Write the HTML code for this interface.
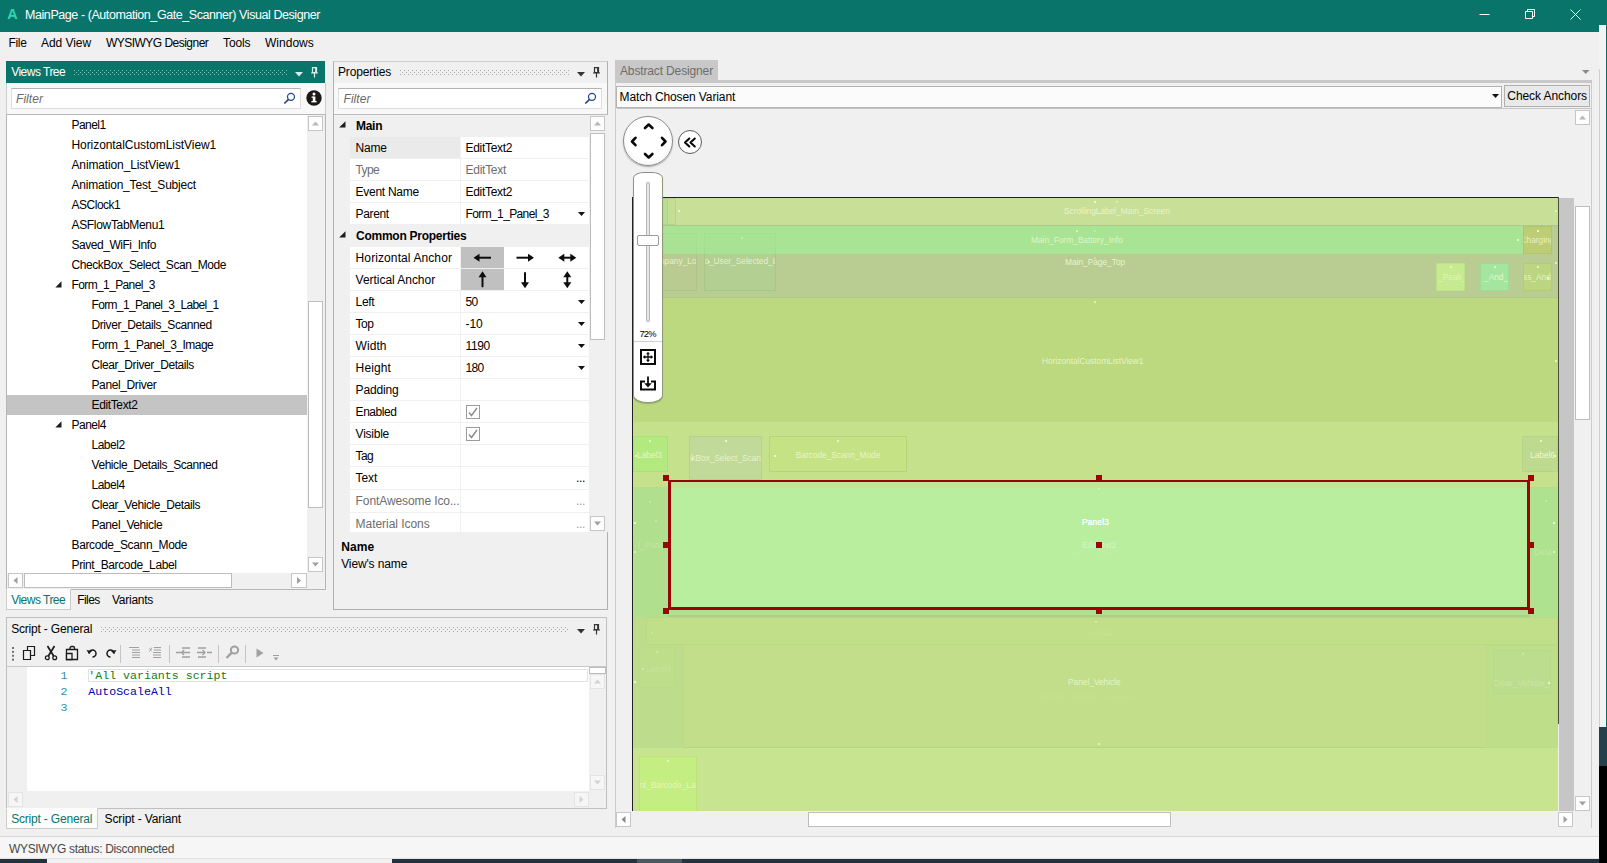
<!DOCTYPE html>
<html lang="en">
<head>
<meta charset="utf-8">
<title>MainPage - (Automation_Gate_Scanner) Visual Designer</title>
<style>
*{box-sizing:border-box;margin:0;padding:0}
html,body{width:1607px;height:863px;overflow:hidden;background:#f0f0f0}
body{position:relative;font-family:"Liberation Sans",sans-serif;font-size:12px;color:#000}
.a{position:absolute}
.t{position:absolute;white-space:pre;line-height:16px;height:16px}
svg{position:absolute;overflow:visible}
</style>
</head>
<body>
<div class="a" style="left:1599px;top:0px;width:8px;height:863px;background:#f3f3f3;"></div>
<div class="a" style="left:1599px;top:0px;width:8px;height:25px;background:#09756a;"></div>
<div class="a" style="left:1605.5px;top:25px;width:1.5px;height:702px;background:#0b6b60;"></div>
<div class="a" style="left:1599px;top:69px;width:1px;height:658px;background:#cfcfcf;"></div>
<div class="a" style="left:1599px;top:727px;width:8px;height:39px;background:#24414b;"></div>
<div class="a" style="left:1599px;top:766px;width:8px;height:97px;background:#000;"></div>
<div class="a" style="left:0px;top:858px;width:1599px;height:1px;background:#e2e2e2;"></div>
<div class="a" style="left:0px;top:859px;width:1599px;height:4px;background:#22333f;"></div>
<div class="a" style="left:47px;top:859px;width:345px;height:4px;background:#f2f2f2;"></div>
<div class="a" style="left:637px;top:859px;width:45px;height:4px;background:#4a5860;"></div>
<div class="a" style="left:0px;top:0px;width:1599px;height:32px;background:#09756a;"></div>
<svg style="left:1470px;top:0" width="129" height="32" viewBox="0 0 129 32" fill="none" stroke="#fff" stroke-width="1"><path d="M9.5 14.5h10"/><path d="M55.5 11.5h7v7h-7z M57.5 11.5v-2h7v7h-2"/><path d="M100.5 9.5l10 10M110.5 9.5l-10 10"/></svg>
<div class="a" style="left:0px;top:32px;width:1599px;height:25px;background:#f0f0f0;"></div>
<div class="a" style="left:6px;top:61px;width:319px;height:22px;background:#09756a;"></div>
<div class="a" style="left:74px;top:70px;width:214px;height:5px;background-image:radial-gradient(circle at 0.5px 0.5px,#7fc4b8 0.55px,transparent 0.75px),radial-gradient(circle at 0.5px 0.5px,#7fc4b8 0.55px,transparent 0.75px);background-size:4px 4px;background-position:0 0,2px 2px"></div>
<svg style="left:295px;top:71.7px" width="8" height="5" viewBox="0 0 8 5"><path d="M0 0h8l-4 4.5z" fill="#d8efe9"/></svg>
<svg style="left:311.0px;top:66.7px" width="8" height="11" viewBox="0 0 8 11" fill="none" stroke="#d8efe9" stroke-width="1.200"><path d="M1.500 0.600h4v5h-4z M4.700 0.600v5 M0 6h7 M3.500 6v4.500"/></svg>
<div class="a" style="left:6px;top:83px;width:319.5px;height:507px;background:#f0f0f0;border:1px solid #cccccc;border-top:none;"></div>
<div class="a" style="left:7px;top:83px;width:317.5px;height:31px;background:#f8f8f8;"></div>
<div class="a" style="left:11px;top:88px;width:290px;height:21px;background:#fff;border:1px solid #dedede;border-top-color:#b4b4b4;"></div>
<svg style="left:283px;top:92px" width="13" height="13" viewBox="0 0 13 13" fill="none" stroke="#21488c" stroke-width="1.250"><circle cx="8" cy="4.800" r="3.500"/><path d="M5.500 7.400L1.300 11.500" stroke-width="1.700"/></svg>
<svg style="left:306px;top:90px" width="16" height="16" viewBox="0 0 16 16"><circle cx="8" cy="8" r="7.700" fill="#1d1818"/><rect x="6.8" y="6.5" width="2.6" height="5.5" fill="#fff"/><rect x="5.6" y="6.5" width="2" height="1.3" fill="#fff"/><rect x="5.4" y="11" width="5.2" height="1.4" fill="#fff"/><circle cx="8" cy="4" r="1.5" fill="#fff"/></svg>
<div class="a" style="left:6px;top:114px;width:319.5px;height:476px;background:#fff;border:1px solid #b6b6b6;"></div>
<div class="a" style="left:7px;top:395px;width:300px;height:20px;background:#c4c4c4;"></div>
<svg style="left:54.500px;top:280.5px" width="7" height="7" viewBox="0 0 7 7"><path d="M6.500 0.300v6.200h-6.200z" fill="#1c1c1c"/></svg>
<svg style="left:54.500px;top:420.5px" width="7" height="7" viewBox="0 0 7 7"><path d="M6.500 0.300v6.200h-6.200z" fill="#1c1c1c"/></svg>
<div class="a" style="left:307px;top:115px;width:17.5px;height:458px;background:#f0f0f0;"></div>
<div class="a" style="left:308px;top:116px;width:15px;height:15px;background:#fdfdfd;border:1px solid #c6c6c6;"></div>
<svg style="left:0;top:0" width="1" height="1"><path d="M312.0 125.5h7l-3.5 -4z" fill="#b8b8b8"/></svg>
<div class="a" style="left:308px;top:301px;width:15px;height:207px;background:#fff;border:1px solid #bdbdbd;"></div>
<div class="a" style="left:308px;top:557px;width:15px;height:15px;background:#fdfdfd;border:1px solid #c6c6c6;"></div>
<svg style="left:0;top:0" width="1" height="1"><path d="M312.0 562.5h7l-3.5 4z" fill="#a0a0a0"/></svg>
<div class="a" style="left:7px;top:573px;width:317.5px;height:16px;background:#f0f0f0;"></div>
<div class="a" style="left:8px;top:573px;width:15px;height:15px;background:#fdfdfd;border:1px solid #c6c6c6;"></div>
<svg style="left:0;top:0" width="1" height="1"><path d="M17.5 577.0v7l-4 -3.5z" fill="#a0a0a0"/></svg>
<div class="a" style="left:24px;top:573px;width:208px;height:15px;background:#fff;border:1px solid #bdbdbd;"></div>
<div class="a" style="left:291px;top:573px;width:16px;height:15px;background:#fdfdfd;border:1px solid #c6c6c6;"></div>
<svg style="left:0;top:0" width="1" height="1"><path d="M297.0 577.0v7l4 -3.5z" fill="#a0a0a0"/></svg>
<div class="a" style="left:6px;top:589px;width:65px;height:21px;background:#fcfcfc;border:1px solid #cccccc;border-top:1px solid #fcfcfc;"></div>
<div class="a" style="left:333px;top:60.5px;width:274.5px;height:549.5px;background:#f0f0f0;border:1px solid #b0b0b0;border-top-color:#cdcdcd;"></div>
<div class="a" style="left:400px;top:70px;width:170px;height:5px;background-image:radial-gradient(circle at 0.5px 0.5px,#a8a8a8 0.55px,transparent 0.75px),radial-gradient(circle at 0.5px 0.5px,#a8a8a8 0.55px,transparent 0.75px);background-size:4px 4px;background-position:0 0,2px 2px"></div>
<svg style="left:577px;top:71.7px" width="8" height="5" viewBox="0 0 8 5"><path d="M0 0h8l-4 4.5z" fill="#333"/></svg>
<svg style="left:593.0px;top:66.7px" width="8" height="11" viewBox="0 0 8 11" fill="none" stroke="#333" stroke-width="1.200"><path d="M1.500 0.600h4v5h-4z M4.700 0.600v5 M0 6h7 M3.500 6v4.500"/></svg>
<div class="a" style="left:334px;top:83px;width:272.5px;height:31px;background:#f8f8f8;"></div>
<div class="a" style="left:338px;top:88px;width:264px;height:21px;background:#fff;border:1px solid #dedede;border-top-color:#b4b4b4;"></div>
<svg style="left:584px;top:92px" width="13" height="13" viewBox="0 0 13 13" fill="none" stroke="#21488c" stroke-width="1.250"><circle cx="8" cy="4.800" r="3.500"/><path d="M5.500 7.400L1.300 11.500" stroke-width="1.700"/></svg>
<div class="a" style="left:334px;top:114px;width:274px;height:418px;background:#f0f0f0;border:1px solid #bcbcbc;border-right:none;border-left:none;border-bottom:none;"></div>
<svg style="left:338.500px;top:121.2px" width="7" height="7" viewBox="0 0 7 7"><path d="M6.500 0.200v6.300h-6.300z" fill="#1c1c1c"/></svg>
<div class="a" style="left:350px;top:137px;width:110px;height:21px;background:#eaeaea;"></div>
<div class="a" style="left:461px;top:137px;width:128px;height:21px;background:#fff;"></div>
<div class="a" style="left:350px;top:159px;width:110px;height:21px;background:#fff;"></div>
<div class="a" style="left:461px;top:159px;width:128px;height:21px;background:#fff;"></div>
<div class="a" style="left:350px;top:181px;width:110px;height:21px;background:#fff;"></div>
<div class="a" style="left:461px;top:181px;width:128px;height:21px;background:#fff;"></div>
<div class="a" style="left:350px;top:203px;width:110px;height:21px;background:#fff;"></div>
<div class="a" style="left:461px;top:203px;width:128px;height:21px;background:#fff;"></div>
<svg style="left:578.0px;top:212.2px" width="7" height="4" viewBox="0 0 7 4"><path d="M0 0h7l-3.5 4z" fill="#111"/></svg>
<svg style="left:338.500px;top:231.2px" width="7" height="7" viewBox="0 0 7 7"><path d="M6.500 0.200v6.300h-6.300z" fill="#1c1c1c"/></svg>
<div class="a" style="left:350px;top:247px;width:110px;height:21px;background:#fff;"></div>
<div class="a" style="left:461px;top:247px;width:128px;height:21px;background:#fff;"></div>
<div class="a" style="left:461px;top:247px;width:43px;height:21px;background:#c0c0c0;"></div>
<svg style="left:0;top:0" width="1" height="1"><path d="M477.0 257.7H491.0" stroke="#0c0c0c" stroke-width="2" fill="none"/><path d="M473.5 257.7l6 -4v8z" fill="#0c0c0c" stroke="none"/></svg>
<svg style="left:0;top:0" width="1" height="1"><path d="M516.5 257.7H530.5" stroke="#0c0c0c" stroke-width="2" fill="none"/><path d="M534 257.7l-6 -4v8z" fill="#0c0c0c" stroke="none"/></svg>
<svg style="left:0;top:0" width="1" height="1"><path d="M561.8 257.7H572.8" stroke="#0c0c0c" stroke-width="2" fill="none"/><path d="M558.3 257.7l6 -4v8z" fill="#0c0c0c" stroke="none"/><path d="M576.3 257.7l-6 -4v8z" fill="#0c0c0c" stroke="none"/></svg>
<div class="a" style="left:350px;top:269px;width:110px;height:21px;background:#fff;"></div>
<div class="a" style="left:461px;top:269px;width:128px;height:21px;background:#fff;"></div>
<div class="a" style="left:461px;top:269px;width:43px;height:21px;background:#c0c0c0;"></div>
<svg style="left:0;top:0" width="1" height="1"><path d="M482.5 275.2V287.2" stroke="#0c0c0c" stroke-width="2" fill="none"/><path d="M482.5 271.2l-4 6h8z" fill="#0c0c0c" stroke="none"/></svg>
<svg style="left:0;top:0" width="1" height="1"><path d="M525 272.2V284.2" stroke="#0c0c0c" stroke-width="2" fill="none"/><path d="M525 288.2l-4 -6h8z" fill="#0c0c0c" stroke="none"/></svg>
<svg style="left:0;top:0" width="1" height="1"><path d="M567.3 275.2V284.2" stroke="#0c0c0c" stroke-width="2" fill="none"/><path d="M567.3 271.2l-4 6h8z" fill="#0c0c0c" stroke="none"/><path d="M567.3 288.2l-4 -6h8z" fill="#0c0c0c" stroke="none"/></svg>
<div class="a" style="left:350px;top:291px;width:110px;height:21px;background:#fff;"></div>
<div class="a" style="left:461px;top:291px;width:128px;height:21px;background:#fff;"></div>
<svg style="left:578.0px;top:300.2px" width="7" height="4" viewBox="0 0 7 4"><path d="M0 0h7l-3.5 4z" fill="#111"/></svg>
<div class="a" style="left:350px;top:313px;width:110px;height:21px;background:#fff;"></div>
<div class="a" style="left:461px;top:313px;width:128px;height:21px;background:#fff;"></div>
<svg style="left:578.0px;top:322.2px" width="7" height="4" viewBox="0 0 7 4"><path d="M0 0h7l-3.5 4z" fill="#111"/></svg>
<div class="a" style="left:350px;top:335px;width:110px;height:21px;background:#fff;"></div>
<div class="a" style="left:461px;top:335px;width:128px;height:21px;background:#fff;"></div>
<svg style="left:578.0px;top:344.2px" width="7" height="4" viewBox="0 0 7 4"><path d="M0 0h7l-3.5 4z" fill="#111"/></svg>
<div class="a" style="left:350px;top:357px;width:110px;height:21px;background:#fff;"></div>
<div class="a" style="left:461px;top:357px;width:128px;height:21px;background:#fff;"></div>
<svg style="left:578.0px;top:366.2px" width="7" height="4" viewBox="0 0 7 4"><path d="M0 0h7l-3.5 4z" fill="#111"/></svg>
<div class="a" style="left:350px;top:379px;width:110px;height:21px;background:#fff;"></div>
<div class="a" style="left:461px;top:379px;width:128px;height:21px;background:#fff;"></div>
<div class="a" style="left:350px;top:401px;width:110px;height:21px;background:#fff;"></div>
<div class="a" style="left:461px;top:401px;width:128px;height:21px;background:#fff;"></div>
<div class="a" style="left:466px;top:405px;width:14px;height:14px;background:#fff;border:1px solid #9c9c9c;"></div>
<svg style="left:468px;top:407px" width="10" height="10" viewBox="0 0 10 10"><path d="M1 5.5l2.5 3L9 1" fill="none" stroke="#8a8a8a" stroke-width="1.4"/></svg>
<div class="a" style="left:350px;top:423px;width:110px;height:21px;background:#fff;"></div>
<div class="a" style="left:461px;top:423px;width:128px;height:21px;background:#fff;"></div>
<div class="a" style="left:466px;top:427px;width:14px;height:14px;background:#fff;border:1px solid #9c9c9c;"></div>
<svg style="left:468px;top:429px" width="10" height="10" viewBox="0 0 10 10"><path d="M1 5.5l2.5 3L9 1" fill="none" stroke="#8a8a8a" stroke-width="1.4"/></svg>
<div class="a" style="left:350px;top:445px;width:110px;height:21px;background:#fff;"></div>
<div class="a" style="left:461px;top:445px;width:128px;height:21px;background:#fff;"></div>
<div class="a" style="left:350px;top:467px;width:110px;height:22px;background:#fff;"></div>
<div class="a" style="left:461px;top:467px;width:128px;height:22px;background:#fff;"></div>
<div class="a" style="left:350px;top:490px;width:110px;height:22px;background:#fff;"></div>
<div class="a" style="left:461px;top:490px;width:128px;height:22px;background:#fff;"></div>
<div class="a" style="left:350px;top:513px;width:110px;height:19px;background:#fff;"></div>
<div class="a" style="left:461px;top:513px;width:128px;height:19px;background:#fff;"></div>
<div class="a" style="left:589px;top:115px;width:18px;height:417px;background:#f0f0f0;"></div>
<div class="a" style="left:590px;top:116px;width:15px;height:15px;background:#fdfdfd;border:1px solid #c6c6c6;"></div>
<svg style="left:0;top:0" width="1" height="1"><path d="M594.0 125.5h7l-3.5 -4z" fill="#b8b8b8"/></svg>
<div class="a" style="left:590px;top:133px;width:15px;height:207px;background:#fff;border:1px solid #bdbdbd;"></div>
<div class="a" style="left:590px;top:516px;width:15px;height:15px;background:#fdfdfd;border:1px solid #c6c6c6;"></div>
<svg style="left:0;top:0" width="1" height="1"><path d="M594.0 521.5h7l-3.5 4z" fill="#a0a0a0"/></svg>
<div class="a" style="left:6px;top:617px;width:601px;height:192px;background:#f0f0f0;border:1px solid #c0c0c0;"></div>
<div class="a" style="left:101px;top:627px;width:468px;height:5px;background-image:radial-gradient(circle at 0.5px 0.5px,#a8a8a8 0.55px,transparent 0.75px),radial-gradient(circle at 0.5px 0.5px,#a8a8a8 0.55px,transparent 0.75px);background-size:4px 4px;background-position:0 0,2px 2px"></div>
<svg style="left:577px;top:628.7px" width="8" height="5" viewBox="0 0 8 5"><path d="M0 0h8l-4 4.5z" fill="#333"/></svg>
<svg style="left:593.0px;top:623.7px" width="8" height="11" viewBox="0 0 8 11" fill="none" stroke="#333" stroke-width="1.200"><path d="M1.500 0.600h4v5h-4z M4.700 0.600v5 M0 6h7 M3.500 6v4.500"/></svg>
<div class="a" style="left:12px;top:646.500px;width:2px;height:14px;background-image:linear-gradient(#707070 1.600px,transparent 1.600px);background-size:2px 3.900px"></div>
<svg style="left:22px;top:645px" width="16" height="16" viewBox="0 0 16 16" fill="#f0f0f0" stroke="#1a1a1a" stroke-width="1.2"><path d="M5.5 1.5h7v9h-7z"/><path d="M1.5 5.5h7v9h-7z"/></svg>
<svg style="left:43px;top:645px" width="16" height="16" viewBox="0 0 16 16" fill="none" stroke="#1a1a1a" stroke-width="1.3"><path d="M4.500 1l6.300 10.300M11.500 1L5.200 11.300" stroke-width="1.700"/><circle cx="4.300" cy="12.800" r="1.900"/><circle cx="11.700" cy="12.800" r="1.900"/></svg>
<svg style="left:64px;top:645px" width="16" height="16" viewBox="0 0 16 16" fill="none" stroke="#1a1a1a" stroke-width="1.300"><path d="M6 4.500v-1.500a1.500 1.500 0 0 1 1.500 -1.500h1.500a1.500 1.500 0 0 1 1.500 1.500v1.500"/><path d="M2.500 4.500h11v10h-11z"/><path d="M2.500 8.500h5.500v6h-5.500z" fill="#f0f0f0"/></svg>
<svg style="left:86px;top:647px" width="13" height="12" viewBox="0 0 13 12" fill="none" stroke="#1a1a1a" stroke-width="1.5"><path d="M3 6.500a3.500 3.500 0 1 1 3.500 3.500"/><path d="M0.500 3l2.500 4 3 -3z" fill="#1a1a1a" stroke="none"/></svg>
<svg style="left:104px;top:647px" width="13" height="12" viewBox="0 0 13 12" fill="none" stroke="#1a1a1a" stroke-width="1.5"><path d="M10 6.500a3.500 3.500 0 1 0 -3.500 3.500"/><path d="M12.500 3l-2.500 4 -3 -3z" fill="#1a1a1a" stroke="none"/></svg>
<div class="a" style="left:120px;top:645px;width:1px;height:18px;background:#c4c4c4;"></div>
<svg style="left:128px;top:647px" width="13" height="11" viewBox="0 0 13 11" stroke="#a0a0a0" stroke-width="1" fill="none"><path d="M1 0.500h10M4 3h8M4 5.500h8M4 8h8M4 10.500h8"/></svg>
<svg style="left:149px;top:647px" width="13" height="11" viewBox="0 0 13 11" stroke="#a0a0a0" stroke-width="1" fill="none"><path d="M5 0.500h7M5 3h7M4 5.500h8M4 8h8M4 10.500h8M0.500 1.500l2 2.500M3 0.500l-2.500 4"/></svg>
<div class="a" style="left:169px;top:645px;width:1px;height:18px;background:#c4c4c4;"></div>
<svg style="left:176px;top:647px" width="15" height="11" viewBox="0 0 15 11" stroke="#a0a0a0" stroke-width="1.3" fill="none"><path d="M6 1h8M0 5.500h5M9 5.500h5M6 10h8M5.500 5.500h5M8 3l-2.500 2.500 2.500 2.500"/></svg>
<svg style="left:197px;top:647px" width="15" height="11" viewBox="0 0 15 11" stroke="#a0a0a0" stroke-width="1.3" fill="none"><path d="M1 1h8M0 5.500h3M10 5.500h5M1 10h8M3 5.500h5M5.500 3l2.500 2.500 -2.500 2.500"/></svg>
<div class="a" style="left:218px;top:645px;width:1px;height:18px;background:#c4c4c4;"></div>
<svg style="left:225px;top:645px" width="15" height="15" viewBox="0 0 15 15" fill="none" stroke="#a0a0a0" stroke-width="2"><circle cx="9.5" cy="5" r="3.600"/><path d="M6.800 7.700L1.500 13" stroke-width="2.400"/></svg>
<div class="a" style="left:245px;top:645px;width:1px;height:18px;background:#c4c4c4;"></div>
<svg style="left:256px;top:648px" width="8" height="10" viewBox="0 0 8 10"><path d="M0.500 0.500v9l7 -4.500z" fill="#a0a0a0"/></svg>
<svg style="left:273px;top:655px" width="6" height="6" viewBox="0 0 6 6"><path d="M0 0.500h6" stroke="#a0a0a0"/><path d="M0.500 2.500h5l-2.500 3z" fill="#a0a0a0"/></svg>
<div class="a" style="left:7px;top:666px;width:599px;height:125px;background:#fff;border:1px solid #c8c8c8;border-left:none;border-right:none;border-bottom:none;"></div>
<div class="a" style="left:7px;top:667px;width:20px;height:124px;background:#f0f0f0;"></div>
<div class="a" style="left:88px;top:668.5px;width:500px;height:13.5px;background:#fff;border:1px solid #e2e2e2;"></div>
<div class="a" style="left:589px;top:668px;width:17px;height:124px;background:#f0f0f0;"></div>
<div class="a" style="left:589px;top:667px;width:17px;height:6.5px;background:#fff;border:1px solid #bdbdbd;"></div>
<div class="a" style="left:590px;top:674px;width:15px;height:15px;background:#f6f6f6;border:1px solid #e4e4e4;"></div>
<svg style="left:0;top:0" width="1" height="1"><path d="M594.0 683.5h7l-3.5 -4z" fill="#d4d4d4"/></svg>
<div class="a" style="left:590px;top:775px;width:15px;height:15px;background:#f6f6f6;border:1px solid #e4e4e4;"></div>
<svg style="left:0;top:0" width="1" height="1"><path d="M594.0 780.5h7l-3.5 4z" fill="#d4d4d4"/></svg>
<div class="a" style="left:7px;top:791px;width:599px;height:17px;background:#f0f0f0;"></div>
<div class="a" style="left:8px;top:792px;width:15px;height:15px;background:#f6f6f6;border:1px solid #e4e4e4;"></div>
<svg style="left:0;top:0" width="1" height="1"><path d="M17.5 796.0v7l-4 -3.5z" fill="#d4d4d4"/></svg>
<div class="a" style="left:574px;top:792px;width:15px;height:15px;background:#f6f6f6;border:1px solid #e4e4e4;"></div>
<svg style="left:0;top:0" width="1" height="1"><path d="M579.5 796.0v7l4 -3.5z" fill="#d4d4d4"/></svg>
<div class="a" style="left:6px;top:808px;width:92px;height:21px;background:#fcfcfc;border:1px solid #cccccc;border-top:1px solid #fcfcfc;"></div>
<div class="a" style="left:0px;top:836px;width:1599px;height:1px;background:#d6d6d6;"></div>
<div class="a" style="left:0px;top:837px;width:1599px;height:21px;background:#f6f6f6;"></div>
<div class="a" style="left:614.5px;top:60px;width:103.5px;height:21px;background:#c8c8c8;"></div>
<div class="a" style="left:614.5px;top:80px;width:977.5px;height:3px;background:#c8c8c8;"></div>
<svg style="left:1581.500px;top:70px" width="7.500" height="4" viewBox="0 0 7.500 4"><path d="M0 0h7.500l-3.750 4z" fill="#8a8a8a"/></svg>
<div class="a" style="left:614.5px;top:83px;width:977.5px;height:745px;background:#f0f0f0;border:1px solid #cccccc;border-top:none;"></div>
<div class="a" style="left:615.5px;top:85.5px;width:886.5px;height:22px;background:#fbfbfb;border:1px solid #b4b4b4;"></div>
<svg style="left:1492px;top:94px" width="7" height="4" viewBox="0 0 7 4"><path d="M0 0h7l-3.500 4z" fill="#111"/></svg>
<div class="a" style="left:1504px;top:85px;width:86px;height:21.5px;background:#e9e9e9;border:1px solid #b0b0b0;"></div>
<div class="a" style="left:617px;top:108px;width:974px;height:1px;background:#c4c4c4;"></div>
<div class="a" id="canvas" style="left:633px;top:198px;width:925px;height:612.500px;overflow:hidden;background:#c3df8c">
<div class="a" style="left:0px;top:0px;width:925px;height:28px;background:#c8df98;overflow:hidden;"><span class="t" style="left:431px;top:7.0px;font-size:8.400px;line-height:12px;height:12px;color:rgba(246,252,222,.72);font-weight:normal;letter-spacing:-0.030px">ScrollingLabel_Main_Screen</span><div class="a" style="left:461px;top:2.5px;width:2px;height:2px;background:rgba(248,255,225,0.8)"></div><div class="a" style="left:482.5px;top:2.5px;width:2px;height:2px;background:rgba(248,255,225,0.4)"></div><div class="a" style="left:922px;top:12px;width:2px;height:2px;background:rgba(248,255,225,0.6)"></div><div class="a" style="left:45px;top:12px;width:2px;height:2px;background:rgba(248,255,225,0.7)"></div></div>
<div class="a" style="left:0px;top:27px;width:925px;height:1.5px;background:#abc98a;overflow:hidden;"></div>
<div class="a" style="left:0px;top:28px;width:890px;height:28px;background:#a8e494;overflow:hidden;"><span class="t" style="left:398px;top:8.0px;font-size:8.400px;line-height:12px;height:12px;color:rgba(246,252,222,.72);font-weight:normal;letter-spacing:-0.030px">Main_Form_Battery_Info</span><div class="a" style="left:461px;top:4px;width:2px;height:2px;background:rgba(248,255,225,0.25)"></div><div class="a" style="left:884px;top:13px;width:2px;height:2px;background:rgba(248,255,225,0.7)"></div><div class="a" style="left:442.5px;top:3.5px;width:2px;height:2px;background:rgba(248,255,225,0.6)"></div></div>
<div class="a" style="left:0px;top:56px;width:925px;height:44px;background:#b9cc91;overflow:hidden;"><span class="t" style="left:432px;top:2.0px;font-size:8.400px;line-height:12px;height:12px;color:rgba(246,252,222,.82);font-weight:normal;letter-spacing:-0.030px">Main_Page_Top</span><div class="a" style="left:461px;top:3px;width:2px;height:2px;background:rgba(248,255,225,0.3)"></div><div class="a" style="left:922px;top:8px;width:2px;height:2px;background:rgba(248,255,225,0.7)"></div></div>
<div class="a" style="left:0px;top:99px;width:925px;height:1px;background:#b0c986;overflow:hidden;"></div>
<div class="a" style="left:0px;top:100px;width:925px;height:124px;background:#bcd980;overflow:hidden;"><span class="t" style="left:409px;top:56.5px;font-size:8.400px;line-height:12px;height:12px;color:rgba(246,252,222,.76);font-weight:normal;letter-spacing:-0.030px">HorizontalCustomListView1</span><div class="a" style="left:461px;top:3px;width:2px;height:2px;background:rgba(248,255,225,0.6)"></div><div class="a" style="left:922px;top:62px;width:2px;height:2px;background:rgba(248,255,225,0.7)"></div></div>
<div class="a" style="left:0px;top:224px;width:925px;height:66px;background:#c5e18b;overflow:hidden;"></div>
<div class="a" style="left:0px;top:289px;width:925px;height:1px;background:#bbd98a;overflow:hidden;"></div>
<div class="a" style="left:0px;top:290px;width:925px;height:129px;background:#b0e090;overflow:hidden;"></div>
<div class="a" style="left:0px;top:417px;width:925px;height:2px;background:#a6d287;overflow:hidden;"></div>
<div class="a" style="left:0px;top:419px;width:925px;height:131px;background:#c2de8a;overflow:hidden;"><div class="a" style="left:465px;top:2px;width:2px;height:2px;background:rgba(248,255,225,0.5)"></div><div class="a" style="left:465px;top:126px;width:2px;height:2px;background:rgba(248,255,225,0.6)"></div></div>
<div class="a" style="left:0px;top:549px;width:925px;height:1px;background:#b6d580;overflow:hidden;"></div>
<div class="a" style="left:0px;top:550px;width:925px;height:64px;background:#c7e490;overflow:hidden;"></div>
<div class="a" style="left:0px;top:0px;width:35px;height:27px;background:#badd92;overflow:hidden;border:1px solid #b4d28a;"></div>
<div class="a" style="left:35px;top:0px;width:8px;height:27px;background:#c4de94;overflow:hidden;border:1px solid #b9d38c;border-left:none;"></div>
<div class="a" style="left:0px;top:35px;width:64px;height:21px;background:rgba(190,220,150,.10);overflow:hidden;border:1px solid rgba(150,190,120,.12);border-bottom:none;"><div class="a" style="left:4px;top:3px;width:2px;height:2px;background:rgba(248,255,225,0.3)"></div></div>
<div class="a" style="left:71px;top:35px;width:72px;height:21px;background:rgba(170,225,150,.10);overflow:hidden;border:1px solid rgba(150,190,125,.12);border-bottom:none;"><div class="a" style="left:36px;top:3px;width:2px;height:2px;background:rgba(248,255,225,0.35)"></div></div>
<div class="a" style="left:0px;top:56px;width:64px;height:37px;background:rgba(190,200,150,.22);overflow:hidden;border:1px solid rgba(150,180,120,.35);border-top:none;"><span class="t" style="left:13px;top:1.3px;font-size:8.400px;line-height:12px;height:12px;color:rgba(246,252,222,.76);font-weight:normal;letter-spacing:-0.030px">Company_Lo</span></div>
<div class="a" style="left:71px;top:56px;width:72px;height:37px;background:rgba(170,215,150,.28);overflow:hidden;border:1px solid rgba(150,185,125,.4);border-top:none;"><span class="t" style="left:-3px;top:1.3px;font-size:8.400px;line-height:12px;height:12px;color:rgba(246,252,222,.76);font-weight:normal;letter-spacing:-0.030px">to_User_Selected_Lo</span><div class="a" style="left:3px;top:7px;width:2px;height:2px;background:rgba(248,255,225,0.5)"></div></div>
<div class="a" style="left:890px;top:28px;width:35px;height:28px;background:#b9cc91;overflow:hidden;"></div>
<div class="a" style="left:890px;top:28px;width:29px;height:28px;background:#bccd76;overflow:hidden;border:1px solid #b2c46c;"><span class="t" style="left:-3.5px;top:7.0px;font-size:8.400px;line-height:12px;height:12px;color:rgba(246,252,222,.76);font-weight:normal;letter-spacing:-0.030px">Charging</span><div class="a" style="left:13px;top:3px;width:2px;height:2px;background:rgba(248,255,225,0.8)"></div></div>
<div class="a" style="left:803px;top:65px;width:29px;height:28px;background:#c5ea90;overflow:hidden;border:1px solid #bde088;"><span class="t" style="left:1px;top:7.0px;font-size:8.400px;line-height:12px;height:12px;color:rgba(246,252,222,.59);font-weight:normal;letter-spacing:-0.030px">_Peak_I</span><div class="a" style="left:13px;top:2px;width:2px;height:2px;background:rgba(248,255,225,0.6)"></div></div>
<div class="a" style="left:847px;top:65px;width:29px;height:28px;background:#a4e6a0;overflow:hidden;border:1px solid #9cdc98;"><span class="t" style="left:3px;top:7.0px;font-size:8.400px;line-height:12px;height:12px;color:rgba(246,252,222,.74);font-weight:normal;letter-spacing:-0.030px">_And_R</span><div class="a" style="left:13px;top:2px;width:2px;height:2px;background:rgba(248,255,225,0.7)"></div></div>
<div class="a" style="left:890px;top:65px;width:29px;height:28px;background:#bbd581;overflow:hidden;border:1px solid #b2cc78;"><span class="t" style="left:-1px;top:7.0px;font-size:8.400px;line-height:12px;height:12px;color:rgba(246,252,222,.74);font-weight:normal;letter-spacing:-0.030px">ss_And_</span><div class="a" style="left:13px;top:2px;width:2px;height:2px;background:rgba(248,255,225,0.7)"></div><div class="a" style="left:23px;top:13px;width:2px;height:2px;background:rgba(248,255,225,0.7)"></div></div>
<div class="a" style="left:0px;top:238px;width:35px;height:36px;background:#b2ea80;overflow:hidden;border:1px solid #a9e078;"><span class="t" style="left:3px;top:12.2px;font-size:8.400px;line-height:12px;height:12px;color:rgba(246,252,222,.76);font-weight:normal;letter-spacing:-0.030px">Label3</span><div class="a" style="left:15px;top:3px;width:2px;height:2px;background:rgba(248,255,225,0.7)"></div><div class="a" style="left:1px;top:18px;width:2px;height:2px;background:rgba(248,255,225,0.7)"></div></div>
<div class="a" style="left:56px;top:238px;width:73px;height:44px;background:#c1d999;overflow:hidden;border:1px solid #b7d090;"><span class="t" style="left:-3px;top:15.3px;font-size:8.400px;line-height:12px;height:12px;color:rgba(246,252,222,.76);font-weight:normal;letter-spacing:-0.030px">ckBox_Select_Scan_M</span><div class="a" style="left:35px;top:3px;width:2px;height:2px;background:rgba(248,255,225,0.8)"></div><div class="a" style="left:1px;top:21px;width:2px;height:2px;background:rgba(248,255,225,0.5)"></div></div>
<div class="a" style="left:136px;top:238px;width:138px;height:36px;background:#c5e285;overflow:hidden;border:1px solid #b6d47a;"><span class="t" style="left:50%;transform:translateX(-50%);top:12.2px;font-size:8.400px;line-height:12px;height:12px;color:rgba(246,252,222,.76);font-weight:normal;letter-spacing:-0.030px">Barcode_Scann_Mode</span><div class="a" style="left:67px;top:3px;width:2px;height:2px;background:rgba(248,255,225,0.7)"></div><div class="a" style="left:4px;top:18px;width:2px;height:2px;background:rgba(248,255,225,0.8)"></div></div>
<div class="a" style="left:889px;top:238px;width:36px;height:36px;background:#bdda8e;overflow:hidden;border:1px solid #b6d488;"><span class="t" style="left:7px;top:12.2px;font-size:8.400px;line-height:12px;height:12px;color:rgba(246,252,222,.89);font-weight:normal;letter-spacing:-0.030px">Label6</span><div class="a" style="left:17px;top:3px;width:2px;height:2px;background:rgba(248,255,225,0.7)"></div><div class="a" style="left:31px;top:18px;width:2px;height:2px;background:rgba(248,255,225,0.8)"></div></div>
<div class="a" style="left:0px;top:290px;width:35px;height:129px;background:#b0e08e;overflow:hidden;"><span class="t" style="left:5px;top:51.0px;font-size:8.400px;line-height:12px;height:12px;color:rgba(246,252,222,.25);font-weight:normal;letter-spacing:-0.030px">I_Panel</span><div class="a" style="left:1px;top:34px;width:2px;height:2px;background:rgba(248,255,225,0.8)"></div><div class="a" style="left:1px;top:63px;width:2px;height:2px;background:rgba(248,255,225,0.6)"></div><div class="a" style="left:22px;top:32px;width:2px;height:2px;background:rgba(248,255,225,0.3)"></div><div class="a" style="left:16px;top:13px;width:2px;height:2px;background:rgba(248,255,225,0.3)"></div></div>
<div class="a" style="left:38px;top:284px;width:857px;height:126px;background:#b9ee9e;overflow:hidden;"><div class="a" style="left:427px;top:5px;width:2px;height:2px;background:rgba(248,255,225,0.4)"></div></div>
<div class="a" style="left:38px;top:284px;width:857px;height:5.5px;background:#bfe695;overflow:hidden;"></div>
<div class="a" style="left:897px;top:290px;width:28px;height:129px;background:#aee28e;overflow:hidden;"><span class="t" style="left:4px;top:57.5px;font-size:8.400px;line-height:12px;height:12px;color:rgba(246,252,222,.30);font-weight:normal;letter-spacing:-0.030px">Deta</span><div class="a" style="left:23px;top:34px;width:2px;height:2px;background:rgba(248,255,225,0.9)"></div><div class="a" style="left:23px;top:63px;width:2px;height:2px;background:rgba(248,255,225,0.6)"></div><div class="a" style="left:15px;top:12px;width:2px;height:2px;background:rgba(248,255,225,0.3)"></div></div>
<span class="t" style="left:449px;top:318px;font-size:8.400px;line-height:12px;height:12px;color:#fff;font-weight:normal;letter-spacing:0.150px;text-shadow:0 0 0.500px #fff">Panel3</span>
<span class="t" style="left:449px;top:341px;font-size:8.400px;line-height:12px;height:12px;color:rgba(246,252,222,.54);letter-spacing:-0.030px">EditText2</span>
<span class="t" style="left:437px;top:349px;font-size:8.400px;line-height:12px;height:12px;color:rgba(246,252,222,.12);letter-spacing:-0.030px">Panel_Driver</span>
<div class="a" style="left:0px;top:419px;width:50px;height:131px;background:#bddd8c;overflow:hidden;"><div class="a" style="left:1px;top:64px;width:2px;height:2px;background:rgba(248,255,225,0.8)"></div></div>
<div class="a" style="left:13px;top:419px;width:912px;height:28px;background:#c1df88;overflow:hidden;border:1px solid #bbd984;"><span class="t" style="left:442px;top:8.5px;font-size:8.400px;line-height:12px;height:12px;color:rgba(246,252,222,.15);font-weight:normal;letter-spacing:-0.030px">Label2</span><div class="a" style="left:4px;top:14px;width:2px;height:2px;background:rgba(248,255,225,0.2)"></div><div class="a" style="left:448px;top:3px;width:2px;height:2px;background:rgba(248,255,225,0.4)"></div></div>
<div class="a" style="left:6px;top:449px;width:36px;height:41px;background:#bfde8b;overflow:hidden;border:1px solid #bcdb88;"><span class="t" style="left:6px;top:15.0px;font-size:8.400px;line-height:12px;height:12px;color:rgba(246,252,222,.20);font-weight:normal;letter-spacing:-0.030px">Label4</span><div class="a" style="left:16px;top:3px;width:2px;height:2px;background:rgba(248,255,225,0.3)"></div><div class="a" style="left:2px;top:20px;width:2px;height:2px;background:rgba(248,255,225,0.35)"></div></div>
<div class="a" style="left:50px;top:447px;width:1px;height:103px;background:#bbd988;overflow:hidden;"></div>
<div class="a" style="left:853px;top:447px;width:72px;height:103px;background:#bfde8a;overflow:hidden;border:1px solid #bcdb88;"></div>
<div class="a" style="left:860px;top:452px;width:58px;height:44px;background:#bddd8e;overflow:hidden;border:1px solid #b8d88a;"><span class="t" style="left:-1px;top:26.0px;font-size:8.400px;line-height:12px;height:12px;color:rgba(246,252,222,.30);font-weight:normal;letter-spacing:-0.030px">Clear_Vehicle_Deta</span><div class="a" style="left:28px;top:2px;width:2px;height:2px;background:rgba(248,255,225,0.3)"></div><div class="a" style="left:54px;top:31px;width:2px;height:2px;background:rgba(248,255,225,0.7)"></div></div>
<span class="t" style="left:435px;top:478px;font-size:8.400px;line-height:12px;height:12px;color:rgba(246,252,222,.74);letter-spacing:-0.030px">Panel_Vehicle</span>
<span class="t" style="left:407px;top:493px;font-size:8.400px;line-height:12px;height:12px;color:rgba(246,252,222,.13);letter-spacing:-0.030px">Vehicle_Details_Scanned</span>
<div class="a" style="left:6px;top:558px;width:58px;height:60px;background:#c5ee82;overflow:hidden;border:1px solid #bce27c;"><span class="t" style="left:-11px;top:21.5px;font-size:8.400px;line-height:12px;height:12px;color:rgba(246,252,222,.64);font-weight:normal;letter-spacing:-0.030px">Print_Barcode_Label</span><div class="a" style="left:27px;top:3px;width:2px;height:2px;background:rgba(248,255,225,0.6)"></div></div>
</div>
<div class="a" style="left:632px;top:197px;width:927px;height:1px;background:#222;"></div>
<div class="a" style="left:632px;top:197px;width:1px;height:613.5px;background:#222;"></div>
<div class="a" style="left:1558px;top:197px;width:1px;height:527px;background:#4a5040;"></div>
<div class="a" style="left:1559px;top:198px;width:15px;height:612.5px;background:#c6c6c6;"></div>
<div class="a" style="left:668px;top:480px;width:862.300px;height:130px;border:3px solid #9b0505;border-top-width:2.500px"></div>
<div class="a" style="left:663.3px;top:475.4px;width:6px;height:6px;background:#9b0505;"></div>
<div class="a" style="left:1096px;top:475.4px;width:6px;height:6px;background:#9b0505;"></div>
<div class="a" style="left:1528.2px;top:475.4px;width:6px;height:6px;background:#9b0505;"></div>
<div class="a" style="left:663.3px;top:542.4px;width:6px;height:6px;background:#9b0505;"></div>
<div class="a" style="left:1096px;top:542px;width:6px;height:6px;background:#9b0505;"></div>
<div class="a" style="left:1528.2px;top:542.4px;width:6px;height:6px;background:#9b0505;"></div>
<div class="a" style="left:663.3px;top:608px;width:6px;height:6px;background:#9b0505;"></div>
<div class="a" style="left:1096px;top:608px;width:6px;height:6px;background:#9b0505;"></div>
<div class="a" style="left:1528.2px;top:608px;width:6px;height:6px;background:#9b0505;"></div>
<div class="a" style="left:623px;top:116px;width:50px;height:50px;border-radius:50%;background:radial-gradient(circle at 50% 45%,#fff 60%,#ececec 88%,#dcdcdc 100%);border:1px solid #8c8c8c;box-shadow:0 1px 1.500px rgba(0,0,0,.3)"></div>
<svg style="left:623.500px;top:116.500px" width="49" height="49" viewBox="0 0 49 49" fill="none" stroke="#0a0a0a" stroke-width="2.600" stroke-linecap="round" stroke-linejoin="round"><path d="M21 11l3.700 -3.500 3.700 3.500M21 37l3.700 3.500 3.700 -3.500M11.500 20.800l-3.500 3.700 3.500 3.700M38 20.800l3.500 3.700 -3.500 3.700"/></svg>
<div class="a" style="left:678px;top:130px;width:24px;height:24px;border-radius:50%;background:#fff;border:1px solid #5a5a5a"></div>
<svg style="left:678.500px;top:130.500px" width="23" height="23" viewBox="0 0 23 23" fill="none" stroke="#0a0a0a" stroke-width="2.100" stroke-linecap="round" stroke-linejoin="round"><path d="M10.300 7.500l-4.300 4 4.300 4M15.800 7.500l-4.300 4 4.300 4"/></svg>
<div class="a" style="left:632.500px;top:171.500px;width:30.500px;height:231px;border-radius:11px 11px 14px 14px / 6px 6px 8px 8px;background:#fff;border:1px solid #8f9a78;border-top-color:#8a8a8a;box-shadow:0 1px 1px rgba(0,0,0,.2)"></div>
<div class="a" style="left:646px;top:182px;width:4px;height:140px;background:#e8e8e8;border:1px solid #b4b4b4;border-radius:2px;"></div>
<div class="a" style="left:637px;top:235px;width:22px;height:11px;background:#fdfdfd;border:1px solid #9a9a9a;border-radius:2px;"></div>
<div class="a" style="left:633.5px;top:341px;width:28.5px;height:1px;background:#d0d0d0;"></div>
<svg style="left:640px;top:349px" width="16" height="16" viewBox="0 0 16 16" fill="none" stroke="#0a0a0a"><rect x="1" y="1" width="14" height="14" stroke-width="2"/><path d="M8 4v8M4 8h8" stroke-width="1.300"/><path d="M8 2.800l-2 2.400h4zM8 13.200l-2 -2.400h4zM2.800 8l2.400 -2v4zM13.200 8l-2.400 -2v4z" fill="#0a0a0a" stroke="none"/></svg>
<svg style="left:640px;top:375.500px" width="16" height="15" viewBox="0 0 16 15" fill="none" stroke="#0a0a0a"><path d="M1 5.500v8h14v-8" stroke-width="2"/><path d="M0 5.500h5M11 5.500h5" stroke-width="1.800"/><path d="M8 0.500v8" stroke-width="1.800"/><path d="M8 11.500l-3.700 -4.300h7.400z" fill="#0a0a0a" stroke="none"/></svg>
<div class="a" style="left:1574px;top:109px;width:17px;height:703px;background:#f0f0f0;"></div>
<div class="a" style="left:1575px;top:110px;width:15px;height:15px;background:#fdfdfd;border:1px solid #c6c6c6;"></div>
<svg style="left:0;top:0" width="1" height="1"><path d="M1579.0 119.5h7l-3.5 -4z" fill="#b8b8b8"/></svg>
<div class="a" style="left:1575px;top:206px;width:15px;height:214px;background:#fff;border:1px solid #bdbdbd;"></div>
<div class="a" style="left:1575px;top:796px;width:15px;height:15px;background:#fdfdfd;border:1px solid #c6c6c6;"></div>
<svg style="left:0;top:0" width="1" height="1"><path d="M1579.0 801.5h7l-3.5 4z" fill="#a0a0a0"/></svg>
<div class="a" style="left:616px;top:812px;width:975px;height:16px;background:#f0f0f0;"></div>
<div class="a" style="left:616px;top:812px;width:15px;height:15px;background:#fdfdfd;border:1px solid #c6c6c6;"></div>
<svg style="left:0;top:0" width="1" height="1"><path d="M625.5 816.0v7l-4 -3.5z" fill="#8a8a8a"/></svg>
<div class="a" style="left:808px;top:812px;width:363px;height:15px;background:#fff;border:1px solid #bdbdbd;"></div>
<div class="a" style="left:1558px;top:812px;width:15px;height:15px;background:#fdfdfd;border:1px solid #c6c6c6;"></div>
<svg style="left:0;top:0" width="1" height="1"><path d="M1563.5 816.0v7l4 -3.5z" fill="#a0a0a0"/></svg>
<span class="t" style="left:7.30px;top:6.20px;font-size:14.5px;letter-spacing:-0.800px;color:#2fd4b0;font-weight:bold;">A</span>
<span class="t" style="left:25.00px;top:7.00px;font-size:12.5px;letter-spacing:-0.429px;color:#fff;">MainPage - (Automation_Gate_Scanner) Visual Designer</span>
<span class="t" style="left:8.50px;top:34.50px;font-size:12px;letter-spacing:-0.336px;">File</span>
<span class="t" style="left:41.00px;top:34.50px;font-size:12px;letter-spacing:-0.061px;">Add View</span>
<span class="t" style="left:106.00px;top:34.50px;font-size:12px;letter-spacing:-0.525px;">WYSIWYG Designer</span>
<span class="t" style="left:223.00px;top:34.50px;font-size:12px;letter-spacing:-0.103px;">Tools</span>
<span class="t" style="left:265.00px;top:34.50px;font-size:12px;letter-spacing:0.016px;">Windows</span>
<span class="t" style="left:11.20px;top:64.00px;font-size:12px;letter-spacing:-0.514px;color:#fff;">Views Tree</span>
<span class="t" style="left:16.00px;top:90.50px;font-size:12px;letter-spacing:0.055px;color:#6a6a6a;font-style:italic;">Filter</span>
<span class="t" style="left:71.50px;top:117.00px;font-size:12px;letter-spacing:-0.562px;">Panel1</span>
<span class="t" style="left:71.50px;top:137.00px;font-size:12px;letter-spacing:-0.073px;">HorizontalCustomListView1</span>
<span class="t" style="left:71.50px;top:157.00px;font-size:12px;letter-spacing:-0.136px;">Animation_ListView1</span>
<span class="t" style="left:71.50px;top:177.00px;font-size:12px;letter-spacing:-0.193px;">Animation_Test_Subject</span>
<span class="t" style="left:71.50px;top:197.00px;font-size:12px;letter-spacing:-0.486px;">ASClock1</span>
<span class="t" style="left:71.50px;top:217.00px;font-size:12px;letter-spacing:-0.321px;">ASFlowTabMenu1</span>
<span class="t" style="left:71.50px;top:237.00px;font-size:12px;letter-spacing:-0.466px;">Saved_WiFi_Info</span>
<span class="t" style="left:71.50px;top:257.00px;font-size:12px;letter-spacing:-0.441px;">CheckBox_Select_Scan_Mode</span>
<span class="t" style="left:71.50px;top:277.00px;font-size:12px;letter-spacing:-0.619px;">Form_1_Panel_3</span>
<span class="t" style="left:91.50px;top:297.00px;font-size:12px;letter-spacing:-0.657px;">Form_1_Panel_3_Label_1</span>
<span class="t" style="left:91.50px;top:317.00px;font-size:12px;letter-spacing:-0.414px;">Driver_Details_Scanned</span>
<span class="t" style="left:91.50px;top:337.00px;font-size:12px;letter-spacing:-0.515px;">Form_1_Panel_3_Image</span>
<span class="t" style="left:91.50px;top:357.00px;font-size:12px;letter-spacing:-0.415px;">Clear_Driver_Details</span>
<span class="t" style="left:91.50px;top:377.00px;font-size:12px;letter-spacing:-0.381px;">Panel_Driver</span>
<span class="t" style="left:91.50px;top:397.00px;font-size:12px;letter-spacing:-0.362px;">EditText2</span>
<span class="t" style="left:71.50px;top:417.00px;font-size:12px;letter-spacing:-0.496px;">Panel4</span>
<span class="t" style="left:91.50px;top:437.00px;font-size:12px;letter-spacing:-0.491px;">Label2</span>
<span class="t" style="left:91.50px;top:457.00px;font-size:12px;letter-spacing:-0.440px;">Vehicle_Details_Scanned</span>
<span class="t" style="left:91.50px;top:477.00px;font-size:12px;letter-spacing:-0.491px;">Label4</span>
<span class="t" style="left:91.50px;top:497.00px;font-size:12px;letter-spacing:-0.419px;">Clear_Vehicle_Details</span>
<span class="t" style="left:91.50px;top:517.00px;font-size:12px;letter-spacing:-0.412px;">Panel_Vehicle</span>
<span class="t" style="left:71.50px;top:537.00px;font-size:12px;letter-spacing:-0.361px;">Barcode_Scann_Mode</span>
<span class="t" style="left:71.50px;top:557.00px;font-size:12px;letter-spacing:-0.367px;">Print_Barcode_Label</span>
<span class="t" style="left:11.20px;top:592.00px;font-size:12px;letter-spacing:-0.514px;color:#0b7566;">Views Tree</span>
<span class="t" style="left:77.20px;top:592.00px;font-size:12px;letter-spacing:-0.569px;">Files</span>
<span class="t" style="left:112.00px;top:592.00px;font-size:12px;letter-spacing:-0.268px;">Variants</span>
<span class="t" style="left:338.00px;top:64.00px;font-size:12px;letter-spacing:-0.170px;">Properties</span>
<span class="t" style="left:343.50px;top:90.50px;font-size:12px;letter-spacing:0.055px;color:#6a6a6a;font-style:italic;">Filter</span>
<span class="t" style="left:356.00px;top:117.70px;font-size:12px;letter-spacing:-0.286px;font-weight:bold;">Main</span>
<span class="t" style="left:355.60px;top:139.70px;font-size:12px;letter-spacing:-0.229px;">Name</span>
<span class="t" style="left:465.50px;top:139.70px;font-size:12px;letter-spacing:-0.307px;">EditText2</span>
<span class="t" style="left:355.60px;top:161.70px;font-size:12px;letter-spacing:-0.654px;color:#6e6e6e;">Type</span>
<span class="t" style="left:465.50px;top:161.70px;font-size:12px;letter-spacing:-0.261px;color:#6e6e6e;">EditText</span>
<span class="t" style="left:355.60px;top:183.70px;font-size:12px;letter-spacing:-0.273px;">Event Name</span>
<span class="t" style="left:465.50px;top:183.70px;font-size:12px;letter-spacing:-0.307px;">EditText2</span>
<span class="t" style="left:355.60px;top:205.70px;font-size:12px;letter-spacing:-0.377px;">Parent</span>
<span class="t" style="left:465.50px;top:205.70px;font-size:12px;letter-spacing:-0.619px;">Form_1_Panel_3</span>
<span class="t" style="left:356.00px;top:227.70px;font-size:12px;letter-spacing:-0.258px;font-weight:bold;">Common Properties</span>
<span class="t" style="left:355.60px;top:249.70px;font-size:12px;letter-spacing:0.099px;">Horizontal Anchor</span>
<span class="t" style="left:355.60px;top:271.70px;font-size:12px;letter-spacing:-0.036px;">Vertical Anchor</span>
<span class="t" style="left:355.60px;top:293.70px;font-size:12px;letter-spacing:-0.329px;">Left</span>
<span class="t" style="left:465.50px;top:293.70px;font-size:12px;letter-spacing:-0.680px;">50</span>
<span class="t" style="left:355.60px;top:315.70px;font-size:12px;letter-spacing:-0.553px;">Top</span>
<span class="t" style="left:465.50px;top:315.70px;font-size:12px;letter-spacing:-0.115px;">-10</span>
<span class="t" style="left:355.60px;top:337.70px;font-size:12px;letter-spacing:0.042px;">Width</span>
<span class="t" style="left:465.50px;top:337.70px;font-size:12px;letter-spacing:-0.403px;">1190</span>
<span class="t" style="left:355.60px;top:359.70px;font-size:12px;letter-spacing:0.119px;">Height</span>
<span class="t" style="left:465.50px;top:359.70px;font-size:12px;letter-spacing:-0.677px;">180</span>
<span class="t" style="left:355.60px;top:381.70px;font-size:12px;letter-spacing:-0.178px;">Padding</span>
<span class="t" style="left:355.60px;top:403.70px;font-size:12px;letter-spacing:-0.464px;">Enabled</span>
<span class="t" style="left:355.60px;top:425.70px;font-size:12px;letter-spacing:-0.249px;">Visible</span>
<span class="t" style="left:355.60px;top:447.70px;font-size:12px;letter-spacing:-0.620px;">Tag</span>
<span class="t" style="left:355.60px;top:469.70px;font-size:12px;letter-spacing:-0.129px;">Text</span>
<span class="t" style="left:576.00px;top:469.70px;font-size:12px;letter-spacing:-0.339px;">...</span>
<span class="t" style="left:355.60px;top:492.70px;font-size:12px;letter-spacing:-0.102px;color:#6e6e6e;">FontAwesome Ico...</span>
<span class="t" style="left:576.00px;top:492.70px;font-size:12px;letter-spacing:-0.339px;color:#9a9a9a;">...</span>
<span class="t" style="left:355.60px;top:515.70px;font-size:12px;letter-spacing:-0.050px;color:#6e6e6e;">Material Icons</span>
<span class="t" style="left:576.00px;top:515.70px;font-size:12px;letter-spacing:-0.339px;color:#9a9a9a;">...</span>
<span class="t" style="left:341.20px;top:539.00px;font-size:12px;letter-spacing:0.078px;font-weight:bold;">Name</span>
<span class="t" style="left:341.20px;top:555.80px;font-size:12px;letter-spacing:-0.131px;">View&#x27;s name</span>
<span class="t" style="left:11.20px;top:621.20px;font-size:12px;letter-spacing:-0.189px;">Script - General</span>
<span class="t" style="left:60.50px;top:667.80px;font-size:11.6px;letter-spacing:0.000px;color:#2b91af;font-family:'Liberation Mono',monospace;">1</span>
<span class="t" style="left:60.50px;top:683.80px;font-size:11.6px;letter-spacing:0.000px;color:#2b91af;font-family:'Liberation Mono',monospace;">2</span>
<span class="t" style="left:60.50px;top:699.80px;font-size:11.6px;letter-spacing:0.000px;color:#2b91af;font-family:'Liberation Mono',monospace;">3</span>
<span class="t" style="left:88.30px;top:667.80px;font-size:11.6px;letter-spacing:0.000px;color:#177a17;font-family:'Liberation Mono',monospace;">&#x27;All variants script</span>
<span class="t" style="left:88.30px;top:683.80px;font-size:11.6px;letter-spacing:0.000px;color:#0000a8;font-family:'Liberation Mono',monospace;">AutoScaleAll</span>
<span class="t" style="left:11.20px;top:811.00px;font-size:12px;letter-spacing:-0.189px;color:#0b7566;">Script - General</span>
<span class="t" style="left:104.50px;top:811.00px;font-size:12px;letter-spacing:-0.123px;">Script - Variant</span>
<span class="t" style="left:9.00px;top:840.50px;font-size:12px;letter-spacing:-0.324px;color:#484848;">WYSIWYG status: Disconnected</span>
<span class="t" style="left:620.00px;top:62.60px;font-size:12px;letter-spacing:-0.140px;color:#6d6d6d;">Abstract Designer</span>
<span class="t" style="left:619.60px;top:88.80px;font-size:12px;letter-spacing:-0.112px;">Match Chosen Variant</span>
<span class="t" style="left:1507.30px;top:88.30px;font-size:12px;letter-spacing:-0.078px;">Check Anchors</span>
<span class="t" style="left:639.50px;top:325.60px;font-size:9.3px;letter-spacing:-0.800px;">72%</span>
</body>
</html>
